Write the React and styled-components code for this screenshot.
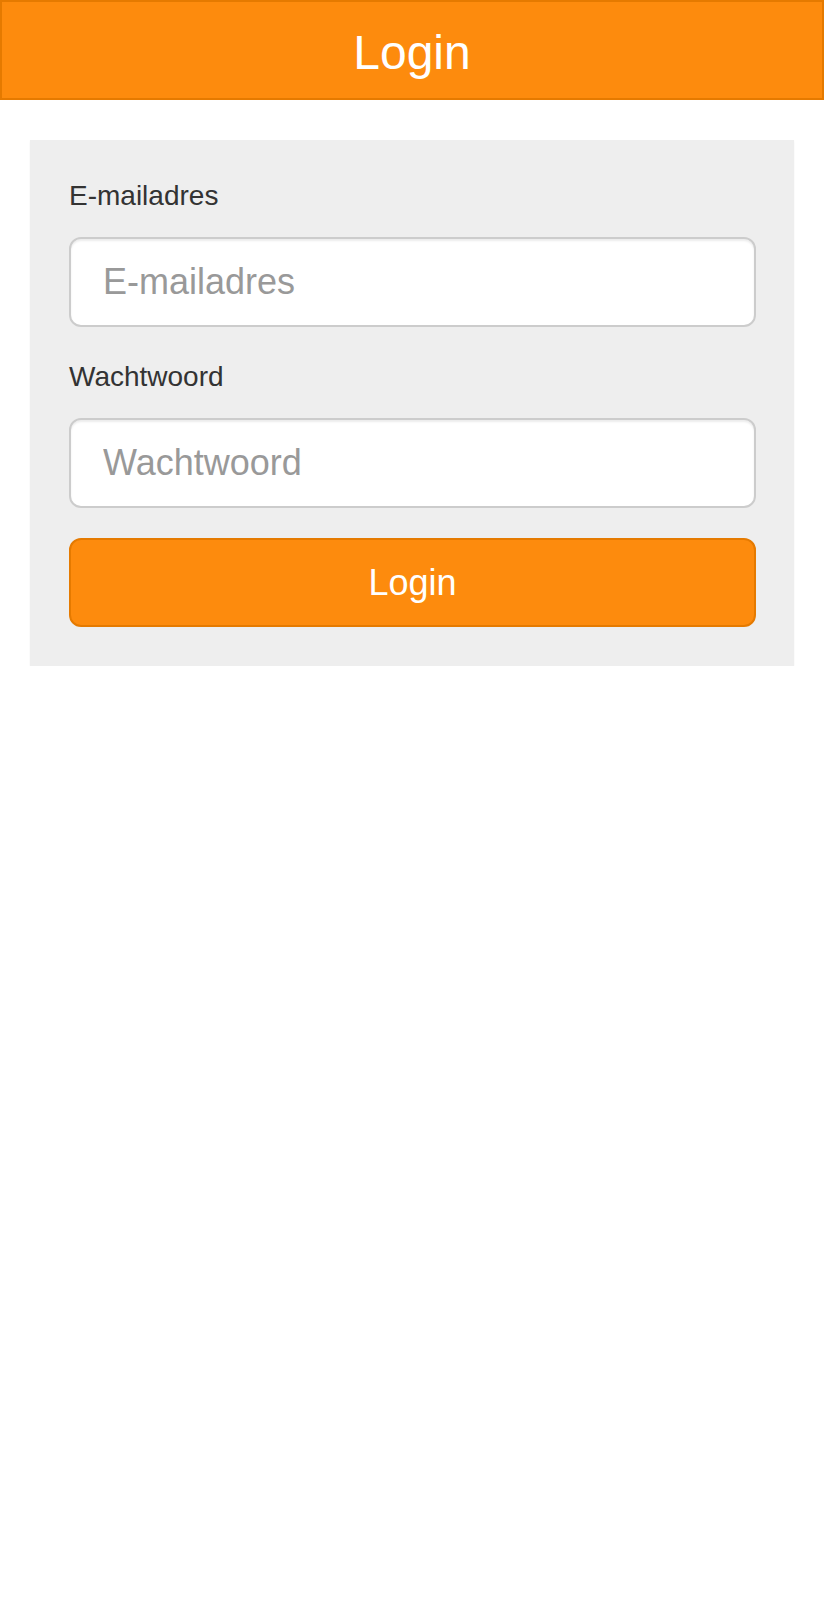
import React from "react";
import styled, { createGlobalStyle } from "styled-components";

const GlobalStyle = createGlobalStyle`
  * {
    box-sizing: border-box;
  }
  body {
    margin: 0;
    background: #ffffff;
    font-family: "Liberation Sans", Arial, Helvetica, sans-serif;
    color: #333333;
  }
`;

const Header = styled.header`
  height: 100px;
  padding-top: 6px;
  background-color: #fd8b0d;
  border: 2px solid #e57a00;
  color: #ffffff;
  text-align: center;
  h1 {
    margin: 0;
    font-size: 48px;
    font-weight: normal;
    line-height: 90px;
  }
`;

const Main = styled.main`
  padding: 40px 30px 0;
`;

const Card = styled.form`
  display: flex;
  flex-direction: column;
  padding: 36px 38px 39px 39px;
  background-color: #eeeeee;
  box-shadow: 0 1px 2px rgba(0, 0, 0, 0.05);
`;

const Group = styled.div`
  display: flex;
  flex-direction: column;
  margin-bottom: 30px;
`;

const Label = styled.label`
  font-size: 28px;
  line-height: 40px;
  margin-bottom: 21px;
  color: #333333;
`;

const Input = styled.input`
  height: 90px;
  width: 100%;
  padding: 0 32px;
  font-family: inherit;
  font-size: 36px;
  color: #555555;
  background-color: #ffffff;
  border: 2px solid #cccccc;
  border-radius: 12px;
  box-shadow: inset 0 2px 2px rgba(0, 0, 0, 0.075);
  outline: none;
  &::placeholder {
    color: #999999;
  }
`;

const Button = styled.button`
  height: 89px;
  width: 100%;
  font-family: inherit;
  font-size: 36px;
  color: #ffffff;
  background-color: #fd8b0d;
  border: 2px solid #e57a00;
  border-radius: 12px;
  cursor: pointer;
`;

export default function App() {
  return (
    <>
      <GlobalStyle />
      <Header>
        <h1>Login</h1>
      </Header>
      <Main>
        <Card onSubmit={(e) => e.preventDefault()}>
          <Group>
            <Label htmlFor="email">E-mailadres</Label>
            <Input id="email" type="email" placeholder="E-mailadres" />
          </Group>
          <Group>
            <Label htmlFor="password">Wachtwoord</Label>
            <Input id="password" type="password" placeholder="Wachtwoord" />
          </Group>
          <Button type="submit">Login</Button>
        </Card>
      </Main>
    </>
  );
}
